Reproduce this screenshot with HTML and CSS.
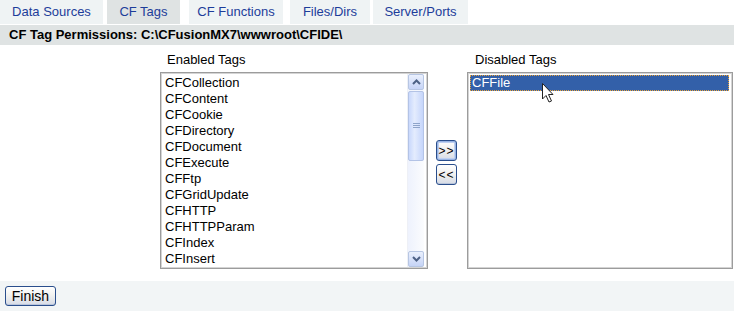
FILE: index.html
```html
<!DOCTYPE html>
<html lang="en">
<head>
  <meta charset="UTF-8" />
  <title>CF Tag Permissions</title>
  <link rel="stylesheet" href="styles.css">
</head>
<body>
<div class="tabs">
  <div class="tab tab-ds">Data Sources</div>
  <div class="tab tab-tags active-tab">CF Tags</div>
  <div class="tab tab-fn">CF Functions</div>
  <div class="tab tab-files">Files/Dirs</div>
  <div class="tab tab-server">Server/Ports</div>
</div>

<div class="section-head">CF Tag Permissions: C:\CFusionMX7\wwwroot\CFIDE\</div>

<div class="lists">
  <div class="list-col enabled-col">
    <div class="list-label">Enabled Tags</div>
    <div class="listbox">
      <div class="items">
        <div class="item">CFCollection</div>
        <div class="item">CFContent</div>
        <div class="item">CFCookie</div>
        <div class="item">CFDirectory</div>
        <div class="item">CFDocument</div>
        <div class="item">CFExecute</div>
        <div class="item">CFFtp</div>
        <div class="item">CFGridUpdate</div>
        <div class="item">CFHTTP</div>
        <div class="item">CFHTTPParam</div>
        <div class="item">CFIndex</div>
        <div class="item">CFInsert</div>
      </div>
      <div class="scrollbar">
        <div class="sb-btn">
          <svg width="9" height="6" viewBox="0 0 9 6"><path d="M1 5 L4.5 1.5 L8 5" fill="none" stroke="#4d6185" stroke-width="2"/></svg>
        </div>
        <div class="sb-thumb">
          <svg width="7" height="6" viewBox="0 0 7 6"><path d="M0 .5h7M0 2.5h7M0 4.5h7" stroke="#8ea4c9" stroke-width="1"/></svg>
        </div>
        <div class="sb-track"></div>
        <div class="sb-btn">
          <svg width="9" height="6" viewBox="0 0 9 6"><path d="M1 1 L4.5 4.5 L8 1" fill="none" stroke="#4d6185" stroke-width="2"/></svg>
        </div>
      </div>
    </div>
  </div>

  <div class="move-btns">
    <button class="xp-btn move focused">&gt;&gt;</button>
    <button class="xp-btn move">&lt;&lt;</button>
  </div>

  <div class="list-col disabled-col">
    <div class="list-label">Disabled Tags</div>
    <div class="listbox">
      <div class="items">
        <div class="item selected">CFFile</div>
      </div>
    </div>
    <svg class="cursor" width="14" height="22" viewBox="0 0 14 22">
      <path d="M1.5 1.5 L1.5 17 L5 13.5 L8 20 L10.5 19 L7.5 12.5 L12 12.5 Z" fill="#fff" stroke="#222" stroke-width="1"/>
    </svg>
  </div>
</div>

<div class="footer">
  <button class="xp-btn finish">Finish</button>
</div>
</body>
</html>
```

FILE: styles.css
```css
  body {
    margin: 0;
    background: #fff;
    font-family: 'Liberation Sans', Arial, sans-serif;
    font-size: 13px;
    color: #000;
    width: 734px;
    height: 311px;
    overflow: hidden;
  }

  .tabs {
    display: flex;
    height: 24px;
    margin-bottom: 1px;
  }

  .tab {
    background: #eff3f4;
    color: #1d3d9a;
    text-align: center;
    line-height: 24px;
    box-sizing: border-box;
  }

  .tab-ds     { width: 103px; }
  .tab-tags   { width: 73px;  margin-left: 4px; }
  .tab-fn     { width: 94px;  margin-left: 9px; }
  .tab-files  { width: 80px;  margin-left: 7px; }
  .tab-server { width: 95px;  margin-left: 3px; }

  .active-tab {
    background: #dfe3e3;
  }

  .section-head {
    background: #dfe3e3;
    height: 20px;
    line-height: 20px;
    font-weight: bold;
    padding-left: 9px;
  }

  .lists {
    display: flex;
    align-items: flex-start;
    padding-left: 160px;
    margin-top: 5px;
  }

  .list-label {
    height: 22px;
    line-height: 20px;
    padding-left: 7px;
  }

  .disabled-col .list-label {
    padding-left: 8px;
  }

  .enabled-col {
    width: 268px;
  }

  .disabled-col {
    width: 266px;
    position: relative;
  }

  .listbox {
    height: 197px;
    box-sizing: border-box;
    border: 1px solid #9c9c9c;
    box-shadow: inset 1px 1px 0 #d4d4d4, inset -1px -1px 0 #d4d4d4;
    padding: 2px 3px 2px 2px;
    display: flex;
    background: #fff;
  }

  .items {
    flex: 1;
    overflow: hidden;
  }

  .item {
    height: 16px;
    line-height: 16px;
    padding-left: 2px;
    white-space: nowrap;
  }

  .selected {
    background: #3360a9;
    color: #fff;
    outline: 1px dotted #e8a33a;
    outline-offset: -1px;
  }

  .scrollbar {
    width: 16px;
    display: flex;
    flex-direction: column;
    background: #f3f6fd;
    border-left: 1px solid #eef0f6;
    margin-top: -1px;
    margin-bottom: -1px;
  }

  .sb-btn {
    height: 16px;
    box-sizing: border-box;
    border: 1px solid #b7c6e3;
    border-radius: 2px;
    background: linear-gradient(#eaf0fd, #c6d4f7);
    display: flex;
    align-items: center;
    justify-content: center;
  }

  .sb-thumb {
    height: 70px;
    margin-top: 1px;
    box-sizing: border-box;
    border: 1px solid #b3c3e6;
    border-radius: 2px;
    background: linear-gradient(90deg, #c9d8fc, #e4ecfd 40%, #c5d5fb);
    display: flex;
    align-items: center;
    justify-content: center;
  }

  .sb-track {
    flex: 1;
    background: linear-gradient(90deg, #eef2fd, #fbfcfe);
  }

  .move-btns {
    display: flex;
    flex-direction: column;
    gap: 3px;
    margin: 90px 10px 0 8px;
  }

  .xp-btn {
    font-family: 'Liberation Sans', Arial, sans-serif;
    font-size: 13px;
    color: #000;
    border: 1px solid #2a4e8c;
    border-radius: 3px;
    background: linear-gradient(#ffffff, #f2f2f0 45%, #d6dbe6);
    box-shadow: inset 0 -1px 0 #b9c5db;
    padding: 0;
    cursor: pointer;
  }

  .move {
    width: 21px;
    height: 21px;
    font-size: 12px;
    letter-spacing: 1px;
    line-height: 18px;
  }

  .focused {
    box-shadow: inset 0 0 0 1px #98b4e4, inset 0 0 0 2px #bfd0f0;
  }

  .cursor {
    position: absolute;
    left: 74px;
    top: 32px;
  }

  .footer {
    position: absolute;
    left: 0;
    right: 0;
    top: 281px;
    height: 30px;
    background: #f2f5f6;
  }

  .finish {
    margin: 5px 0 0 5px;
    width: 51px;
    height: 20px;
    line-height: 18px;
    font-size: 14px;
  }
```
